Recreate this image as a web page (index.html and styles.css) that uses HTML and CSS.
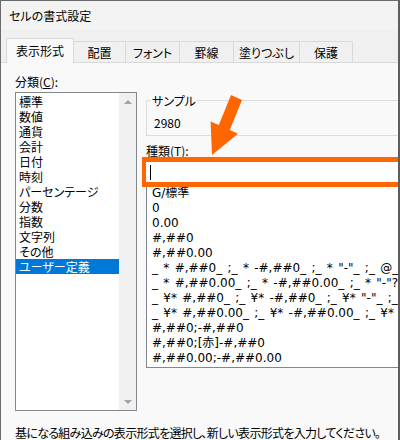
FILE: index.html
```html
<!DOCTYPE html>
<html lang="ja">
<head>
<meta charset="utf-8">
<link rel="stylesheet" href="styles.css">
</head>
<body>
<div class="window">
  <div class="titlebar">セルの書式設定</div>
  <div class="tabs">
    <div class="tab active w-a">表示形式</div>
    <div class="tab w-b">配置</div>
    <div class="tab w-c">フォント</div>
    <div class="tab w-d">罫線</div>
    <div class="tab w-e">塗りつぶし</div>
    <div class="tab w-f">保護</div>
  </div>
  <div class="panel">
    <div class="left">
      <div class="label">分類(<u>C</u>):</div>
      <div class="listbox">
        <div class="items">
          <div class="item">標準</div>
          <div class="item">数値</div>
          <div class="item">通貨</div>
          <div class="item">会計</div>
          <div class="item">日付</div>
          <div class="item">時刻</div>
          <div class="item">パーセンテージ</div>
          <div class="item">分数</div>
          <div class="item">指数</div>
          <div class="item">文字列</div>
          <div class="item">その他</div>
          <div class="item selected">ユーザー定義</div>
        </div>
        <div class="scrollbar">
          <div class="sbtn"><span class="tri-up"></span></div>
          <div class="sbtn"><span class="tri-down"></span></div>
        </div>
      </div>
    </div>
    <div class="right">
      <fieldset class="sample">
        <legend>サンプル</legend>
        <div class="value">2980</div>
      </fieldset>
      <div class="label type-label">種類(<u>T</u>):</div>
      <div class="input"><span class="caret"></span></div>
      <div class="formats">
        <div class="fmt">G/標準</div>
        <div class="fmt">0</div>
        <div class="fmt">0.00</div>
        <div class="fmt">#,##0</div>
        <div class="fmt">#,##0.00</div>
        <div class="fmt">_ * #,##0_ ;_ * -#,##0_ ;_ * "-"_ ;_ @_ </div>
        <div class="fmt">_ * #,##0.00_ ;_ * -#,##0.00_ ;_ * "-"??_ ;_ @_ </div>
        <div class="fmt">_ ¥* #,##0_ ;_ ¥* -#,##0_ ;_ ¥* "-"_ ;_ @_ </div>
        <div class="fmt">_ ¥* #,##0.00_ ;_ ¥* -#,##0.00_ ;_ ¥* "-"??_ ;_ @_ </div>
        <div class="fmt">#,##0;-#,##0</div>
        <div class="fmt">#,##0;[赤]-#,##0</div>
        <div class="fmt">#,##0.00;-#,##0.00</div>
      </div>
    </div>
    <div class="footer">基になる組み込みの表示形式を選択し、新しい表示形式を入力してください。</div>
  </div>
  <svg class="arrow" width="400" height="440" viewBox="0 0 400 440">
    <polygon points="231,95 242,100 229.8,130 238,133.7 212,155 210.6,121.5 218.8,125.1" fill="#ff6600"/>
  </svg>
</div>
</body>
</html>
```
FILE: styles.css
```css
html, body {
  margin: 0;
  padding: 0;
}
body {
  width: 400px;
  height: 440px;
  overflow: hidden;
  font-family: "Noto Sans CJK JP", "Noto Sans", sans-serif;
  font-feature-settings: "palt";
  font-size: 12px;
  color: #000;
}
.window {
  position: relative;
  width: 400px;
  height: 440px;
  box-sizing: border-box;
  border-top: 1px solid #6b6b6b;
  border-left: 1px solid #6b6b6b;
  border-right: 2px solid #5e5e5e;
  background: #f0f0f0;
  overflow: hidden;
  display: flex;
  flex-direction: column;
}
.titlebar {
  height: 29px;
  line-height: 29px;
  padding-left: 8px;
  background: #f3f3f3;
  flex: none;
}
.tabs {
  height: 32px;
  flex: none;
  display: flex;
  align-items: flex-end;
  padding-left: 5px;
  background: #f0f0f0;
}
.tab {
  box-sizing: border-box;
  height: 21px;
  border-top: 1px solid #d9d9d9;
  border-right: 1px solid #d9d9d9;
  background: #f0f0f0;
  display: flex;
  align-items: center;
  justify-content: center;
  flex: none;
}
.tab.active {
  position: relative;
  z-index: 1;
  height: 25px;
  margin-bottom: -1px;
  border-left: 1px solid #d9d9d9;
  background: #f9f9f9;
  padding-bottom: 1px;
}
.w-a { width: 68px; }
.w-b { width: 52px; }
.w-c { width: 54px; }
.w-d { width: 54px; }
.w-e { width: 66px; }
.w-f { width: 53px; }
.panel {
  flex: 1;
  background: #f9f9f9;
  border-top: 1px solid #d9d9d9;
  display: grid;
  grid-template-columns: 122px 270px;
  grid-template-rows: auto auto;
  column-gap: 9px;
  padding: 11px 0 0 14px;
  align-content: start;
}
.label {
  line-height: 15px;
  height: 15px;
  white-space: nowrap;
}
.listbox {
  margin-top: 3px;
  height: 319px;
  box-sizing: border-box;
  border: 1px solid #828790;
  background: #fff;
  display: flex;
}
.items {
  flex: 1;
  padding-top: 1px;
}
.item {
  line-height: 15px;
  height: 15px;
  padding-left: 3px;
  white-space: nowrap;
}
.item.selected {
  background: #0078d7;
  color: #fff;
}
.scrollbar {
  width: 17px;
  flex: none;
  background: #f0f0f0;
  display: flex;
  flex-direction: column;
  justify-content: space-between;
}
.sbtn {
  height: 17px;
  display: flex;
  align-items: center;
  justify-content: center;
}
.tri-up {
  width: 0;
  height: 0;
  border-left: 4px solid transparent;
  border-right: 4px solid transparent;
  border-bottom: 4px solid #a3a3a3;
}
.tri-down {
  width: 0;
  height: 0;
  border-left: 4px solid transparent;
  border-right: 4px solid transparent;
  border-top: 4px solid #a3a3a3;
}
.right {
  display: flex;
  flex-direction: column;
  min-width: 0;
}
.sample {
  margin: 19px 0 0 0;
  padding: 0 0 5px 4px;
  border: 1px solid #dcdcdc;
  min-width: 0;
}
.sample legend {
  padding: 0 1px;
  line-height: 15px;
}
.value {
  padding-top: 7px;
  padding-left: 3px;
  line-height: 15px;
  height: 15px;
}
.type-label {
  margin-top: 7px;
}
.input {
  position: relative;
  z-index: 1;
  margin-top: -1px;
  margin-left: -4px;
  height: 30px;
  width: 262px;
  box-sizing: border-box;
  border-style: solid;
  border-color: #ff6600;
  border-width: 5px 4px;
  background: #fff;
  padding: 3px 0 0 4px;
}
.caret {
  display: block;
  width: 1px;
  height: 15px;
  background: #000;
}
.formats {
  margin-top: -3px;
  height: 184px;
  box-sizing: border-box;
  border: 1px solid #828790;
  background: #fff;
  padding: 1px 0 0 5px;
  overflow: hidden;
  font-family: "DejaVu Sans", "Noto Sans CJK JP", sans-serif;
  font-feature-settings: normal;
}
.fmt {
  line-height: 15px;
  height: 15px;
  white-space: pre;
  word-spacing: 1.5px;
}
.footer {
  grid-column: 1 / -1;
  margin-top: 14px;
  line-height: 15px;
  white-space: nowrap;
  letter-spacing: -0.7px;
}
.arrow {
  position: absolute;
  left: -1px;
  top: -1px;
  pointer-events: none;
}
```
